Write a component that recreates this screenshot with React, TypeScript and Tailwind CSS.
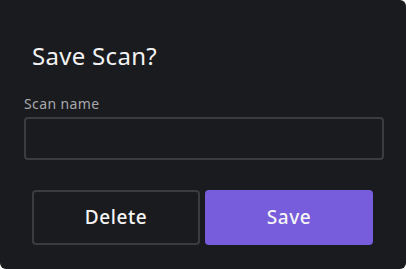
import React from "react";

export default function App() {
  return (
    <div className="w-[406px] h-[269px] bg-white" style={{ fontFamily: '"Noto Sans", sans-serif' }}>
      <div className="w-[406px] h-[269px] bg-[#1a1b1e] rounded-tr-[6px] rounded-b-[6px] flex flex-col">
        <h1 className="pl-[32px] pt-[40px] text-[24px] leading-[32px] font-normal tracking-[0.3px] text-[#f2f2f2]">Save Scan?</h1>
        <label className="pl-[24px] mt-[22px] text-[14px] leading-[20px] tracking-[0.4px] text-[#a8a9ad]">Scan name</label>
        <input
          className="ml-[24px] mt-[3px] w-[360px] h-[43px] rounded-[4px] border-2 border-[#3b3c40] bg-[#1a1b1e] outline-none text-white px-3"
          type="text"
        />
        <div className="flex pl-[32px] mt-[30px] gap-[5px]">
          <button className="w-[168px] h-[55px] rounded-[4px] border-2 border-[#3b3c40] bg-[#1a1b1e] text-[#f5f5f5] text-[19px] font-medium tracking-[0.6px]">
            Delete
          </button>
          <button className="w-[168px] h-[55px] rounded-[4px] bg-[#775cdb] text-[#f5f5f5] text-[19px] font-medium tracking-[0.6px]">
            Save
          </button>
        </div>
      </div>
    </div>
  );
}
